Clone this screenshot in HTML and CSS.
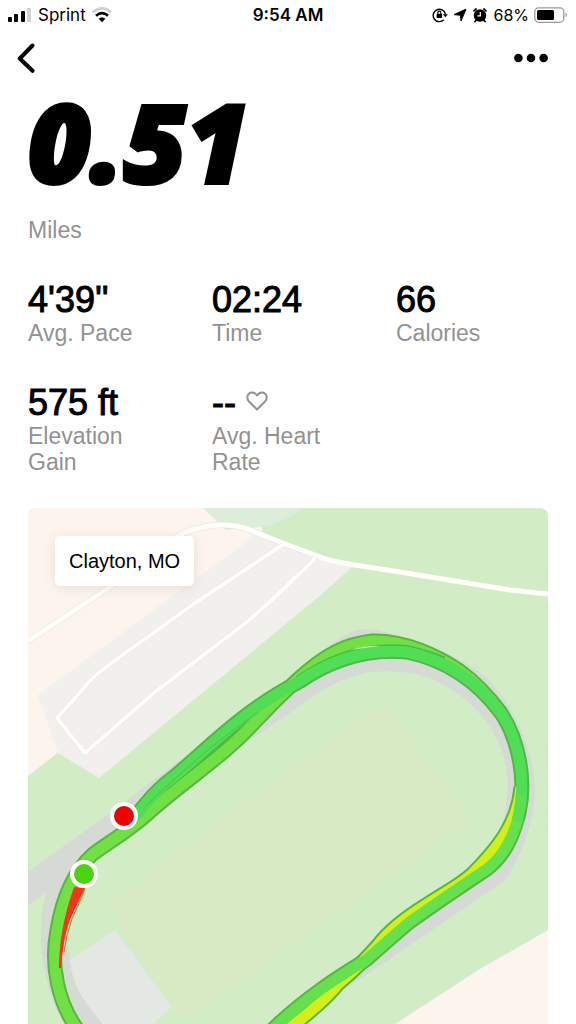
FILE: index.html
```html
<!DOCTYPE html>
<html lang="en">
<head>
<meta charset="utf-8">
<meta name="viewport" content="width=device-width, initial-scale=1">
<title>Run summary</title>
<link rel="stylesheet" href="styles.css">
</head>
<body>
<div class="status">
  <div class="status-left">
    <svg class="signal" viewBox="0 0 24 16" width="24" height="16" aria-hidden="true"><rect x="0" y="10" width="4" height="5" rx="1"/><rect x="6" y="7" width="4" height="8" rx="1"/><rect x="13" y="4" width="4" height="11" rx="1"/><rect x="19" y="1" width="4" height="14" rx="1" fill="#d2d2d2"/></svg>
    <span>Sprint</span>
    <svg class="wifi" viewBox="0 0 20 16" width="20" height="16" aria-hidden="true" fill="none"><path d="M1 5.200Q10-2.500 19 5.200" stroke="#cfcfcf" stroke-width="2.600"/><path d="M4 8.700Q10 3.500 16 8.700" stroke="#000" stroke-width="2.700"/><path d="M6.700 11.800Q10 8.700 13.300 11.800L10 15.200Z" fill="#000"/></svg>
  </div>
  <strong class="clock">9:54 AM</strong>
  <div class="status-right">
    <svg viewBox="0 0 16 16" width="16" height="16" aria-hidden="true" fill="none" stroke="#000" stroke-width="1.400"><path d="M11.800 12.800A6.200 6.200 0 1 1 13.400 7"/><path d="M10.900 7.200h5l-2.500 3z" fill="#000" stroke="none"/><rect x="4.600" y="6.800" width="5.400" height="4.200" rx=".6" fill="#000" stroke="none"/><path d="M5.800 7V5.600a1.500 1.500 0 0 1 3 0V7" stroke-width="1.100"/></svg>
    <svg class="arrow" viewBox="0 0 14 14" width="14" height="14" aria-hidden="true"><path d="M13 1.200 8 13 7.500 7.300 1 6.600Z" stroke="#000" stroke-linejoin="round"/></svg>
    <svg viewBox="0 0 16 16" width="16" height="16" aria-hidden="true"><circle cx="8" cy="8.500" r="6.200"/><path d="M2 3.800 4 2M12 2l2 1.800M4.200 13l-1.200 1.500M11.800 13l1.200 1.500" stroke="#000" stroke-width="1.800" stroke-linecap="round"/><path d="M8.300 5v3.800H5.500" stroke="#fff" stroke-width="1.200" fill="none"/></svg>
    <span>68%</span>
    <svg viewBox="0 0 34 18" width="34" height="18" aria-hidden="true"><rect x=".8" y="1.800" width="29" height="14.500" rx="4" fill="none" stroke="#9b9b9b" stroke-width="1.300"/><rect x="3" y="4" width="17" height="10" rx="1.500"/><path d="M31.500 6.500q3 2.500 0 5z" fill="#9b9b9b"/></svg>
  </div>
</div>
<header class="nav">
  <button class="icon-button" type="button" aria-label="Back"><svg viewBox="0 0 20 30" width="20" height="30" fill="none" stroke="#000" stroke-width="4" stroke-linecap="round" stroke-linejoin="round"><path d="M16.500 2.500 3.800 15.500 16.500 27.800"/></svg></button>
  <button class="icon-button" type="button" aria-label="More options"><svg viewBox="0 0 34 10" width="34" height="10"><circle cx="4.400" cy="5" r="4.300"/><circle cx="17" cy="5" r="4.300"/><circle cx="29.600" cy="5" r="4.300"/></svg></button>
</header>
<main>
  <section class="distance">
    <h1>0.51</h1>
    <p>Miles</p>
  </section>
  <dl class="stats">
    <div><dt>Avg. Pace</dt><dd>4'39''</dd></div>
    <div><dt>Time</dt><dd>02:24</dd></div>
    <div><dt>Calories</dt><dd>66</dd></div>
    <div><dt>Elevation Gain</dt><dd>575 ft</dd></div>
    <div><dt>Avg. Heart Rate</dt><dd>-- <svg class="heart" viewBox="0 0 22 24" width="22" height="24" fill="none" stroke="#929292" stroke-width="2" stroke-linejoin="round" aria-hidden="true"><path d="M11 18.500 3 10.500C-.5 6.500 2 1.500 6 1.500c2.500 0 4 1.500 5 3 1-1.500 2.500-3 5-3 4 0 6.500 5 3 9Z"/></svg></dd></div>
  </dl>
  <section class="map" aria-label="Route map">
    <svg class="map-art" viewBox="28 508 520 516" preserveAspectRatio="xMidYMin slice" aria-hidden="true">
      <rect x="28" y="508" width="520" height="516" fill="#d2ecc6"/>
      <path d="M28 508H203L226 528 262 526V540L55 755 28 776Z" fill="#fcf4ed"/>
      <path d="M203 508H302C290 518 278 524 261 527L226 530Z" fill="#dcedd9"/>
      <path d="M548 930 480 969 395 1024H548Z" fill="#fcf4ed"/>
      <path d="M257 534 290 543 352 567 322 594 99 778 58 753 38 695Z" fill="#f2f0ed"/>
      <path d="M385 700 472 821 182 1024 107 903Z" fill="#d9ebc5"/>
      <path d="M28 872 110 813 200 745 300 669C322 652 340 636 355 630Q370 627 388 633 440 645 480 672C515 702 537 755 535 800 530 835 516 867 503 882L320 1006 295 1024H270L487 858C508 825 514 780 500 746 484 708 447 680 415 674 365 665 333 679 290 713L210 767 135 828 90 863C65 895 62 935 73 973 80 993 90 1010 103 1024H64C44 990 34 935 46 893L28 905Z" fill="#d5dad5"/>
      <path d="M70 960 115 930 172 1007 153 1024H103C83 1001 72 985 70 960Z" fill="#e3e8e2"/>
      <g fill="none" stroke-linejoin="round">
        <path d="M28 641 110 587 165 545C188 524 228 521 250 530L285 544 315 555" stroke="#e7e2dd" stroke-width="6"/>
        <path d="M28 641 110 587 165 545C188 524 228 521 250 530L285 544 315 555Q328 561 355 565L400 572 510 590 548 594" stroke="#fffefb" stroke-width="5"/>
        <path d="M284 544 195 603 110 664Q91 678 84 688L57 718 85 753 155 692 243 625Q260 612 300 573 312 563 316 556" stroke="#e9e5e1" stroke-width="5"/>
        <path d="M284 544 195 603 110 664Q91 678 84 688L57 718 85 753 155 692 243 625Q260 612 300 573 312 563 316 556" stroke="#fffefb" stroke-width="4"/>
      </g>
      <g fill="none" stroke-linejoin="round">
        <g stroke="#55b644" stroke-width="15">
          <path d="M78 1030C58 1003 50 965 57 930 62 900 73 872 93 854 112 840 132 829 152 810 190 777 225 755 255 722 270 706 280 696 297 680 325 654 346 644 372 641 405 640 438 656 460 671 478 684 490 698 501 713"/>
          <path d="M128 825C145 805 155 790 176 775 205 751 245 709 297 683 332 659 369 648 407 652 445 660 477 681 501 713 520 742 526 782 519 813 512 840 503 857 487 869L444 898 411 921C395 934 380 948 366 960 350 970 310 993 272 1030"/>
          <path d="M521 787C518 824 496 850 472 874 460 885 444 893 426 905 405 918 388 932 378 945 365 960 350 974 338 984 325 1000 310 1012 290 1028"/>
        </g>
        <path d="M78 1030C58 1003 50 965 57 930 62 900 73 872 93 854 112 840 132 829 152 810 190 777 225 755 255 722 270 706 280 696 297 680 325 654 346 644 372 641 405 640 438 656 460 671 478 684 490 698 501 713" stroke="#70e043" stroke-width="11"/>
        <path d="M300 682C332 659 369 648 407 652 420 655 432 658 442 663" stroke="#48bd48" stroke-width="14"/>
        <path d="M521 787C518 824 496 850 472 874 460 885 444 893 426 905 405 918 388 932 378 945 365 960 350 974 338 984 325 1000 310 1012 290 1028" stroke="#d4ef16" stroke-width="11"/>
        <path d="M132 820C145 805 155 790 176 775 205 751 245 709 297 683 332 659 369 648 407 652 445 660 477 681 501 713 520 742 526 782 519 813" stroke="#50de55" stroke-width="11"/>
        <path d="M518 818C512 840 503 857 487 869L444 898 411 921C395 934 380 948 366 960 350 970 310 993 272 1030" stroke="#64e14c" stroke-width="11"/>
        <path d="M521 795Q521 805 517 821" stroke="#59df51" stroke-width="11"/>
        <path d="M145 807C180 773 215 742 257 713" stroke="#54bc43" stroke-width="1"/>
      </g>
      <path d="M351 650Q365 645 381 646 365 648 351 650Z" fill="#b4e6a8"/>
      <path d="M74 887 85 888 73 913Q64 930 61 968H59Q59 930 74 887Z" fill="#fb3318"/>
      <path d="M85 889 72 919Q66 935 64 952" fill="none" stroke="#a58a24" stroke-width="1"/>
      <circle cx="124" cy="816" r="12" fill="#f20000" stroke="#fff" stroke-width="4"/>
      <circle cx="84" cy="874" r="12" fill="#4cd30f" stroke="#fff" stroke-width="4"/>
    </svg>
    <span class="place">Clayton, MO</span>
  </section>
</main>
</body>
</html>
```
FILE: styles.css
```css
* { box-sizing: border-box; }
body {
  margin: 0;
  min-height: 100vh;
  display: flex;
  flex-direction: column;
  background: #fff;
  color: #000;
  font-family: "Liberation Sans", Arial, sans-serif;
}
svg { display: block; flex: none; }
.status {
  display: grid;
  grid-template-columns: 1fr auto 1fr;
  align-items: center;
  height: 30px;
  padding: 0 8px;
  font: 17px/24px Inter, sans-serif;
}
.status-left, .status-right { display: flex; align-items: center; gap: 6px; }
.status-right { justify-content: flex-end; gap: 5px; font-size: 16px; }
.clock { font-weight: 600; }
.nav {
  display: flex;
  justify-content: space-between;
  align-items: center;
  height: 56px;
  padding: 0 28px 0 16px;
}
.icon-button {
  display: flex;
  align-items: center;
  min-height: 40px;
  padding: 0;
  border: 0;
  background: none;
}
main {
  flex: 1;
  display: flex;
  flex-direction: column;
  padding: 0 28px;
}
h1, p, dl, dd { margin: 0; }
h1 {
  font: italic 800 108px/112px "Open Sans", sans-serif;
  -webkit-text-stroke: 4px #000;
}
.distance p, dt {
  color: #929292;
  font-size: 23px;
  line-height: 26px;
}
.distance p { padding-top: 19px; }
.stats {
  display: grid;
  grid-template-columns: repeat(3, 1fr);
  gap: 36px 32px;
  padding-top: 36px;
}
.stats > div {
  display: flex;
  flex-direction: column-reverse;
  justify-content: flex-end;
  padding-right: 8px;
}
dd {
  display: flex;
  align-items: center;
  gap: 10px;
  font-size: 36px;
  line-height: 41px;
  -webkit-text-stroke: 1px #000;
}
.map {
  position: relative;
  flex: 1;
  min-height: 320px;
  margin-top: 33px;
  border-radius: 8px 8px 0 0;
  overflow: hidden;
}
.map-art { width: 100%; height: 100%; }
.place {
  position: absolute;
  top: 28px;
  left: 27px;
  padding: 13px 14px;
  border-radius: 5px;
  background: #fff;
  box-shadow: 0 2px 12px rgba(60, 40, 20, .1);
  font-size: 20px;
  line-height: 24px;
}
```
